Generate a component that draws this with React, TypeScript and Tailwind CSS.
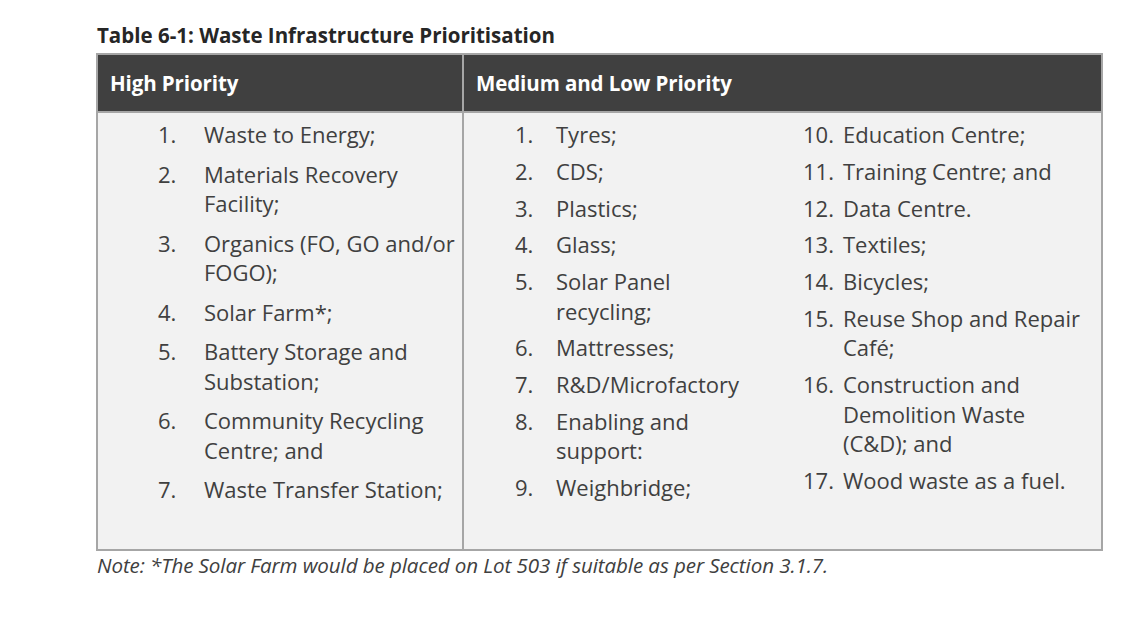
type Item = { n: string; lines: string[] };

const high: Item[] = [
  { n: '1.', lines: ['Waste to Energy;'] },
  { n: '2.', lines: ['Materials Recovery', 'Facility;'] },
  { n: '3.', lines: ['Organics (FO, GO and/or', 'FOGO);'] },
  { n: '4.', lines: ['Solar Farm*;'] },
  { n: '5.', lines: ['Battery Storage and', 'Substation;'] },
  { n: '6.', lines: ['Community Recycling', 'Centre; and'] },
  { n: '7.', lines: ['Waste Transfer Station;'] },
];

const medA: Item[] = [
  { n: '1.', lines: ['Tyres;'] },
  { n: '2.', lines: ['CDS;'] },
  { n: '3.', lines: ['Plastics;'] },
  { n: '4.', lines: ['Glass;'] },
  { n: '5.', lines: ['Solar Panel', 'recycling;'] },
  { n: '6.', lines: ['Mattresses;'] },
  { n: '7.', lines: ['R&D/Microfactory'] },
  { n: '8.', lines: ['Enabling and', 'support:'] },
  { n: '9.', lines: ['Weighbridge;'] },
];

const medB: Item[] = [
  { n: '10.', lines: ['Education Centre;'] },
  { n: '11.', lines: ['Training Centre; and'] },
  { n: '12.', lines: ['Data Centre.'] },
  { n: '13.', lines: ['Textiles;'] },
  { n: '14.', lines: ['Bicycles;'] },
  { n: '15.', lines: ['Reuse Shop and Repair', 'Café;'] },
  { n: '16.', lines: ['Construction and', 'Demolition Waste', '(C&D); and'] },
  { n: '17.', lines: ['Wood waste as a fuel.'] },
];

function List({ items, numW, gap }: { items: Item[]; numW: string; gap: string }) {
  return (
    <ol className={`flex flex-col ${gap}`}>
      {items.map(it => (
        <li key={it.n} className="flex">
          <span className={`${numW} shrink-0`}>{it.n}</span>
          <span className="flex flex-col">
            {it.lines.map(l => (
              <span key={l} className="whitespace-nowrap">{l}</span>
            ))}
          </span>
        </li>
      ))}
    </ol>
  );
}

export default function App() {
  return (
    <div className="w-[1146px] h-[618px] bg-white text-[#404040] font-['Open_Sans',sans-serif]">
      <div className="pt-[23px] pl-[97px]">
        {/* Caption */}
        <div className="text-[20.5px] leading-[24px] font-bold text-[#262626]">
          Table 6-1: Waste Infrastructure Prioritisation
        </div>

        {/* Table */}
        <div className="mt-[6px] ml-[-1px] w-[1007px] h-[498px] border-2 border-[#a6a6a6] flex flex-col">
          <div className="h-[58px] bg-[#404040] flex border-b-2 border-[#a6a6a6] text-white font-bold text-[20.5px] tracking-[-0.1px]">
            <div className="w-[366px] border-r-2 border-[#a6a6a6] flex items-center px-[12px] pt-[1px]">High Priority</div>
            <div className="flex-1 flex items-center px-[12px] pt-[1px]">Medium and Low Priority</div>
          </div>
          <div className="flex-1 bg-[#f2f2f2] flex text-[22px] leading-[29.5px]">
            <div className="w-[366px] border-r-2 border-[#a6a6a6] pt-[7px] pl-[60px]">
              <List items={high} numW="w-[46px]" gap="gap-[10px]" />
            </div>
            <div className="flex-1 flex pt-[7px] pl-[51px]">
              <div className="w-[288px]">
                <List items={medA} numW="w-[41px]" gap="gap-[7.25px]" />
              </div>
              <List items={medB} numW="w-[40px]" gap="gap-[7.25px]" />
            </div>
          </div>
        </div>

        {/* Note */}
        <div className="mt-[1px] italic text-[20.6px] leading-[26px] text-[#404040] tracking-[-0.1px]">
          Note: *The Solar Farm would be placed on Lot 503 if suitable as per Section 3.1.7.
        </div>
      </div>
    </div>
  );
}
